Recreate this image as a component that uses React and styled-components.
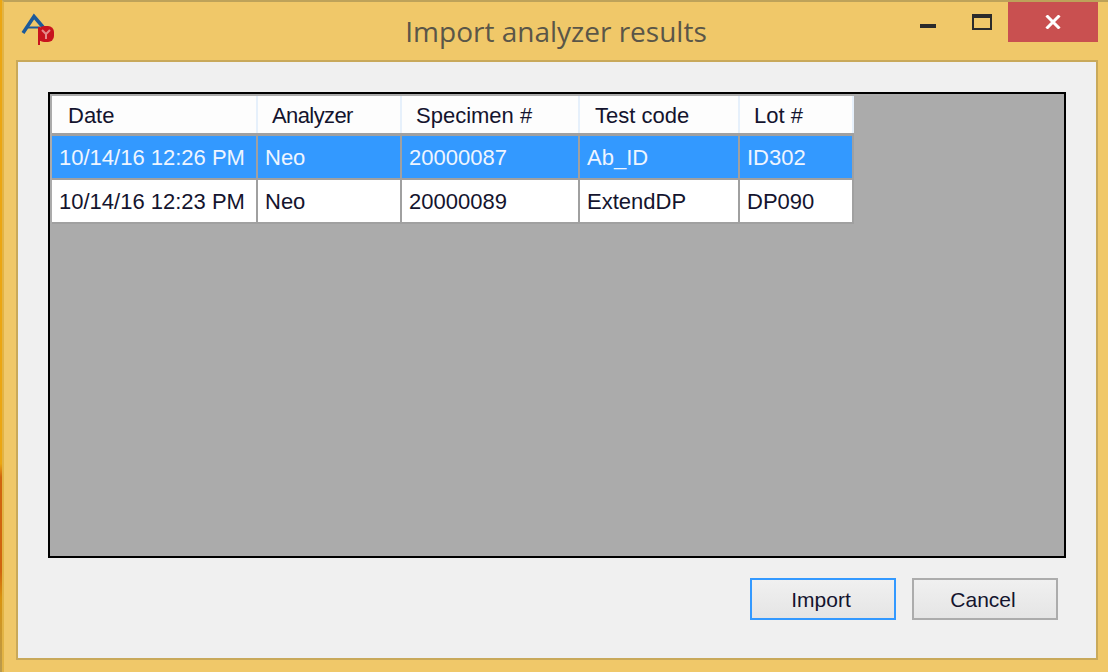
import styled, { createGlobalStyle } from "styled-components"

const GlobalStyle = createGlobalStyle`
    html, body {
        margin: 0;
        padding: 0;
        background: #f0c869;
    }
    * {
        box-sizing: border-box;
    }
`;

const Screen = styled.div`
    display: flex;
    width: 1108px;
    height: 672px;
    overflow: hidden;
`;

const DesktopEdge = styled.div`
    width: 2px;
    flex-shrink: 0;
    background: linear-gradient(180deg, #eba612 0%, #eba612 69%, #d0650f 71%, #d0650f 85%, #d8930f 89%, #b89a50 100%);
`;

const Window = styled.div`
    flex: 1;
    display: flex;
    flex-direction: column;
    background: #f0c869;
    border-top: 2px solid #bda25a;
    border-left: 2px solid #e2b445;
`;

const TitleBar = styled.div`
    display: grid;
    grid-template-columns: 1fr auto 1fr;
    height: 58px;
    align-items: start;
`;

const LogoBox = styled.div`
    padding: 10px 0 0 16px;
`;

const Title = styled.div`
    font-family: "Open Sans", sans-serif;
    font-size: 28px;
    line-height: 36px;
    margin-top: 11px;
    color: #5a5648;
`;

const Controls = styled.div`
    display: flex;
    justify-content: flex-end;
    padding-right: 10px;
`;

const ControlButton = styled.div`
    display: flex;
    align-items: center;
    justify-content: center;
    width: ${(p) => p.$width}px;
    height: 40px;
    background: ${(p) => (p.$close ? "#c95050" : "transparent")};
`;

const Panel = styled.div`
    width: 1082px;
    height: 600px;
    margin-left: 12px;
    padding: 30px;
    background: #f0f0f0;
    border: 2px solid #c9a95a;
`;

const GridView = styled.div`
    height: 466px;
    padding: 2px;
    background: #ababab;
    border: 2px solid #000;
`;

const Row = styled.div`
    display: grid;
    grid-template-columns: 204px 142px 176px 158px 112px;
    column-gap: 2px;
    width: 802px;
    height: ${(p) => (p.$header ? "40px" : "44px")};
    padding-bottom: ${(p) => (p.$header ? "3px" : "2px")};
    background: #a0a0a0;
`;

const HeaderCell = styled.div`
    height: 37px;
    font-family: "Liberation Sans", Arial, sans-serif;
    font-size: 22px;
    line-height: 40px;
    padding-left: ${(p) => p.$indent}px;
    letter-spacing: ${(p) => p.$spacing || 0}px;
    color: #14142e;
    background: #fdfdfd;
    box-shadow: 2px 0 0 #e6f0fb;
`;

const Cell = styled.div`
    height: 42px;
    font-family: "Liberation Sans", Arial, sans-serif;
    font-size: 22px;
    line-height: 43px;
    padding-left: 7px;
    white-space: nowrap;
    color: ${(p) => (p.$selected ? "#eef5ff" : "#14142e")};
    background: ${(p) => (p.$selected ? "#3399ff" : "#ffffff")};
`;

const ButtonRow = styled.div`
    display: flex;
    justify-content: flex-end;
    gap: 16px;
    margin-top: 20px;
    padding-right: 8px;
`;

const Button = styled.button`
    width: 146px;
    height: 42px;
    padding: 1px 4px 0 0;
    font-family: "Liberation Sans", Arial, sans-serif;
    font-size: 21px;
    color: #14142e;
    background: linear-gradient(180deg, #f0f0f0, #e5e5e5);
    border: 2px solid ${(p) => (p.$active ? "#3399ff" : "#acacac")};
    border-radius: 0;
`;

const columns = [
    { label: "Date", indent: 16 },
    { label: "Analyzer", indent: 14, spacing: -0.6 },
    { label: "Specimen #", indent: 14 },
    { label: "Test code", indent: 15 },
    { label: "Lot #", indent: 14 },
];

const results = [
    ["10/14/16 12:26 PM", "Neo", "20000087", "Ab_ID", "ID302"],
    ["10/14/16 12:23 PM", "Neo", "20000089", "ExtendDP", "DP090"],
];

function Logo() {
    return (
        <svg width="36" height="36" viewBox="0 0 36 36">
            <path d="M3 21 L14 4.5 L23 15" fill="none" stroke="#1c5a9a" strokeWidth="3.5" />
            <path d="M8 15.5 L20 15.5" stroke="#1c5a9a" strokeWidth="2" />
            <path d="M19 33 L19 15" stroke="#c8141e" strokeWidth="2" />
            <rect x="18" y="14" width="16" height="16" rx="6" fill="#c8141e" />
            <path d="M22 18 L26 22 L30 18 M26 22 L26 27" fill="none" stroke="#e58a8a" strokeWidth="2" />
        </svg>
    )
}

function App() {
    return (
        <Screen>
            <GlobalStyle />
            <DesktopEdge />
            <Window>
                <TitleBar>
                    <LogoBox>
                        <Logo />
                    </LogoBox>
                    <Title>Import analyzer results</Title>
                    <Controls>
                        <ControlButton $width={56}>
                            <svg width="16" height="24" viewBox="0 0 16 24">
                                <rect x="0" y="14" width="16" height="4" fill="#2b2b2b" />
                            </svg>
                        </ControlButton>
                        <ControlButton $width={52}>
                            <svg width="20" height="16" viewBox="0 0 20 16">
                                <rect x="1" y="1" width="18" height="14" fill="none" stroke="#2b2b2b" strokeWidth="2" />
                                <rect x="0" y="0" width="20" height="4" fill="#2b2b2b" />
                            </svg>
                        </ControlButton>
                        <ControlButton $width={90} $close>
                            <svg width="16" height="14" viewBox="0 0 16 14">
                                <path d="M1.5 0.5 L14.5 13.5 M14.5 0.5 L1.5 13.5" stroke="#fff" strokeWidth="3" />
                            </svg>
                        </ControlButton>
                    </Controls>
                </TitleBar>
                <Panel>
                    <GridView>
                        <Row $header>
                            {columns.map((c) => (
                                <HeaderCell key={c.label} $indent={c.indent} $spacing={c.spacing}>{c.label}</HeaderCell>
                            ))}
                        </Row>
                        {results.map((row, i) => (
                            <Row key={row[2]}>
                                {row.map((value) => (
                                    <Cell key={value} $selected={i === 0}>{value}</Cell>
                                ))}
                            </Row>
                        ))}
                    </GridView>
                    <ButtonRow>
                        <Button $active>Import</Button>
                        <Button>Cancel</Button>
                    </ButtonRow>
                </Panel>
            </Window>
        </Screen>
    )
}

export default App;
